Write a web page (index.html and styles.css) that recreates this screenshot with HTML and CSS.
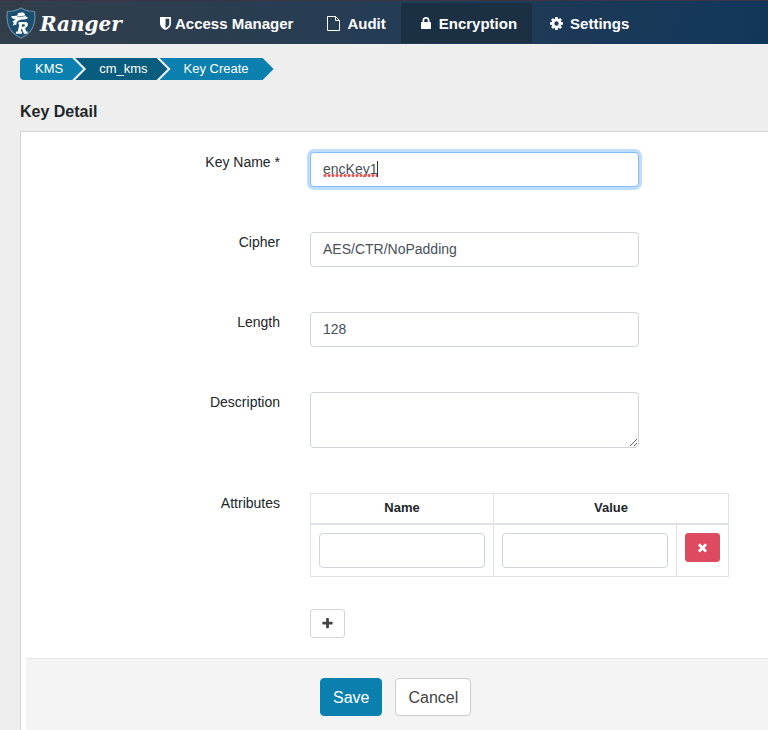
FILE: index.html
```html
<!DOCTYPE html>
<html lang="en">
<head>
<meta charset="utf-8">
<meta name="viewport" content="width=device-width, initial-scale=1">
<title>Ranger - Key Create</title>
<link rel="stylesheet" href="styles.css">
</head>
<body>
<header class="topbar">
  <a class="brand" href="#">
    <svg class="brand-shield" viewBox="0 0 30 32" aria-hidden="true">
      <path d="M15 1C11 3.500 6.500 4.500 1.500 4.500C.7 10 .9 16 3.500 21C6 25.500 10 29 15 31C20 29 24 25.500 26.500 21C29.100 16 29.300 10 28.500 4.500C23.500 4.500 19 3.500 15 1Z" fill="#1b4f70" stroke="#66899f" stroke-width="1.200"/>
      <path d="M5 9.500C7 8.800 9.500 9 11.500 8.500C11.500 6.500 12.500 5 14 6C15.500 4.500 18 5 19 7.500C19.200 8.500 19.500 9.500 20.500 9.800C21.500 10 22 10.500 21.500 11.500C19 12.800 15 12 12.500 13.500L10.500 15.500L10.500 17.500L6.500 18.500L7.800 16L6.500 14.500L9.500 12.500C7.500 12 5.500 11 5 9.500Z" fill="#fff"/>
      <path d="M11.500 9.500C14 10 17 9.500 19.300 8.600" fill="none" stroke="#1b4f70" stroke-width=".7"/>
      <path d="M12.800 15H19Q22.800 15.300 21.700 18.500Q21 20.600 19 21.100L20.300 24.500H21.700L21.200 26.800H17.900L15.900 21.800H15.300L14.800 24.500H16.200L15.700 26.800H9.800L10.300 24.500H11.800L13.300 17.300H12.300ZM16.200 17.300L15.700 19.800H17.300Q18.700 19.600 18.900 18.400Q19 17.300 17.900 17.300Z" fill="#fff" fill-rule="evenodd"/>
    </svg>
    <span class="brand-name">Ranger</span>
  </a>
  <nav class="menu">
    <a class="menu-item" href="#">
      <svg class="icon-shield" viewBox="0 0 11 13" aria-hidden="true"><path d="M0 0H11V6.500C11 9.500 8.500 11.800 5.500 13C2.500 11.800 0 9.500 0 6.500ZM5.500 1.800V11.100C7.700 10 9.300 8.500 9.300 6.500V1.800Z" fill="#fff" fill-rule="evenodd"/></svg>Access Manager</a>
    <a class="menu-item menu-audit" href="#">
      <svg class="icon-file" viewBox="0 0 13 15" aria-hidden="true"><path d="M.5.5H8.500L12.500 4.500V14.500H.5ZM8.500.5V4.500H12.500" fill="none" stroke="#fff"/></svg>Audit</a>
    <a class="menu-item menu-active" href="#" aria-current="page">
      <svg class="icon-lock" viewBox="0 0 10 12" aria-hidden="true"><path d="M1.500 5V3.500A3.500 3.500 0 0 1 8.500 3.500V5H9.200Q10 5 10 5.800V11.200Q10 12 9.200 12H.8Q0 12 0 11.200V5.800Q0 5 .8 5ZM3.200 5H6.800V3.600A1.800 1.800 0 0 0 3.200 3.600Z" fill="#fff" fill-rule="evenodd"/></svg>Encryption</a>
    <a class="menu-item menu-settings" href="#">
      <svg class="icon-cog" viewBox="128 128 1536 1536" aria-hidden="true"><path fill="#fff" d="M1152 896q0-106-75-181t-181-75-181 75-75 181 75 181 181 75 181-75 75-181zm512-109v222q0 12-8 23t-20 13l-185 28q-19 54-39 91 35 50 107 138 10 12 10 25t-9 23q-27 37-99 108t-94 71q-12 0-26-9l-138-108q-44 23-91 38-16 136-29 186-7 28-36 28h-222q-14 0-24.500-8.500t-11.500-21.500l-28-184q-49-16-90-37l-141 107q-10 9-25 9-14 0-25-11-126-114-165-168-7-10-7-23 0-12 8-23 15-21 51-66.500t54-70.500q-27-50-41-99l-183-27q-13-2-21-12.500t-8-23.500v-222q0-12 8-23t19-13l186-28q14-46 39-92-40-57-107-138-10-12-10-24 0-10 9-23 26-36 98.500-107.500t94.500-71.500q13 0 26 10l138 107q44-23 91-38 16-136 29-186 7-28 36-28h222q14 0 24.500 8.500t11.500 21.500l28 184q49 16 90 37l142-107q9-9 24-9 13 0 25 10 129 119 165 170 7 8 7 22 0 12-8 23-15 21-51 66.500t-54 70.500q26 50 41 98l183 28q13 2 21 12.500t8 23.500z"/></svg>Settings</a>
  </nav>
</header>

<main class="page">
  <nav class="crumbs" aria-label="Breadcrumb">
    <a class="crumb crumb-first" href="#">KMS</a>
    <a class="crumb crumb-dark" href="#">cm_kms</a>
    <a class="crumb crumb-last" href="#">Key Create</a>
  </nav>
  <h1 class="title">Key Detail</h1>

  <form class="panel">
    <div class="fields">
      <label class="label" for="key-name">Key Name *</label>
      <div class="control typed">
        <input class="input input-focus" id="key-name" type="text" value="encKey1" spellcheck="false">
        <span class="spelling"></span>
      </div>

      <label class="label" for="cipher">Cipher</label>
      <div class="control"><input class="input" id="cipher" type="text" value="AES/CTR/NoPadding"></div>

      <label class="label" for="length">Length</label>
      <div class="control"><input class="input" id="length" type="text" value="128"></div>

      <label class="label" for="description">Description</label>
      <div class="control"><textarea class="input textarea" id="description"></textarea></div>

      <span class="label" id="attributes">Attributes</span>
      <div class="attributes">
        <table class="table" aria-labelledby="attributes">
          <colgroup><col class="col-text"><col class="col-text"><col></colgroup>
          <thead>
            <tr><th>Name</th><th colspan="2">Value</th></tr>
          </thead>
          <tbody>
            <tr>
              <td><input class="input" type="text" aria-label="Name"></td>
              <td><input class="input" type="text" aria-label="Value"></td>
              <td><button class="small-btn remove" type="button" aria-label="Remove attribute"><svg class="icon-small" viewBox="0 0 1792 1792" aria-hidden="true"><path fill="#fff" d="M1490 1322q0 40-28 68l-136 136q-28 28-68 28t-68-28l-294-294-294 294q-28 28-68 28t-68-28l-136-136q-28-28-28-68t28-68l294-294-294-294q-28-28-28-68t28-68l136-136q28-28 68-28t68 28l294 294 294-294q28-28 68-28t68 28l136 136q28 28 28 68t-28 68l-294 294 294 294q28 28 28 68z"/></svg></button></td>
            </tr>
          </tbody>
        </table>
        <button class="small-btn add" type="button" aria-label="Add attribute"><svg class="icon-small" viewBox="0 0 1792 1792" aria-hidden="true"><path fill="#444" d="M1600 736v192q0 40-28 68t-68 28h-416v416q0 40-28 68t-68 28h-192q-40 0-68-28t-28-68v-416h-416q-40 0-68-28t-28-68v-192q0-40 28-68t68-28h416v-416q0-40 28-68t68-28h192q40 0 68 28t28 68v416h416q40 0 68 28t28 68z"/></svg></button>
      </div>
    </div>
    <div class="actions">
      <button class="btn save" type="button">Save</button>
      <button class="btn cancel" type="button">Cancel</button>
    </div>
  </form>
</main>
</body>
</html>
```
FILE: styles.css
```css
* {
  box-sizing: border-box;
}

body {
  margin: 0;
  min-height: 100vh;
  display: flex;
  flex-direction: column;
  background: #eee;
  color: #212529;
  font-family: "Liberation Sans", Arial, sans-serif;
  font-size: 14px;
  line-height: 21px;
}

/* Header */
.topbar {
  display: flex;
  height: 44px;
  border-top: 1px solid #3a3444;
  background: linear-gradient(100deg, #323e4a 0%, #263d54 45%, #12365a 100%);
}

.brand {
  display: flex;
  align-items: center;
  gap: 4px;
  width: 145px;
  padding-left: 6px;
  color: #fff;
  text-decoration: none;
}

.brand-shield {
  width: 30px;
  height: 32px;
}

.brand-name {
  padding-top: 4px;
  font-family: "DejaVu Serif", serif;
  font-size: 20px;
  font-style: italic;
  font-weight: bold;
}

.menu {
  display: flex;
  padding: 2px 0 1px;
}

.menu-item {
  display: flex;
  align-items: center;
  gap: 4px;
  padding: 0 15px;
  color: #fff;
  font-size: 15px;
  font-weight: bold;
  text-decoration: none;
  white-space: nowrap;
}

.menu-audit {
  gap: 7px;
  padding-left: 19px;
}

.menu-active {
  gap: 8px;
  padding-left: 20px;
  background: #1b3143;
}

.menu-settings {
  gap: 7px;
  padding-left: 18px;
}

.icon-shield {
  width: 11px;
  height: 13px;
}

.icon-file {
  width: 13px;
  height: 15px;
}

.icon-lock {
  width: 10px;
  height: 12px;
}

.icon-cog {
  width: 13px;
  height: 13px;
}

/* Page */
.page {
  flex: 1;
  display: flex;
  flex-direction: column;
  padding: 14px 0 0 20px;
}

.crumbs {
  display: flex;
}

.crumb {
  height: 22px;
  margin-right: -8px;
  padding: 0 20px 0 24px;
  background: #0b7fad;
  clip-path: polygon(0 0, calc(100% - 11px) 0, 100% 50%, calc(100% - 11px) 100%, 0 100%, 11px 50%);
  color: #fff;
  font-size: 13px;
  line-height: 22px;
  text-decoration: none;
}

.crumb-first {
  padding-left: 15px;
  border-radius: 4px 0 0 4px;
  clip-path: polygon(0 0, calc(100% - 11px) 0, 100% 50%, calc(100% - 11px) 100%, 0 100%);
}

.crumb-dark {
  background: #085c7d;
}

.crumb-last {
  padding-right: 25px;
}

.title {
  margin: 21px 0 9px;
  font-size: 16px;
  line-height: 21px;
}

.panel {
  flex: 1;
  display: flex;
  flex-direction: column;
  border: solid #d3d3d3;
  border-width: 1px 0 0 1px;
  background: #fff;
}

.fields {
  display: grid;
  grid-template-columns: 259px minmax(0, 1fr);
  gap: 45px 30px;
  padding: 20px 30px 20px 0;
}

.label {
  text-align: right;
}

.control {
  display: flex;
  max-width: 329px;
}

.input {
  display: block;
  width: 100%;
  height: 35px;
  padding: 5px 12px 7px;
  border: 1px solid #ced4da;
  border-radius: 4px;
  background: #fff;
  color: #495057;
  font: inherit;
  outline: none;
}

.input-focus {
  border-color: #80bdff;
  box-shadow: 0 0 0 3px #bfdeff;
}

.textarea {
  height: 56px;
  resize: vertical;
}

/* Spelling underline and text cursor over the typed value */
.typed {
  position: relative;
}

.spelling {
  position: absolute;
  top: 9px;
  left: 13px;
  width: 55px;
  height: 16px;
  border-right: 1px solid #333;
  background: radial-gradient(circle at 50% 50%, #e8534d 1px, transparent 2px) 0 100% / 4px 3px repeat-x;
  pointer-events: none;
}

/* Attributes */
.table {
  width: 419px;
  border-collapse: collapse;
  table-layout: fixed;
}

.col-text {
  width: 183px;
}

.table th,
.table td {
  padding: 8px;
  border: 1px solid #dee2e6;
  vertical-align: top;
}

.table th {
  padding: 3px 8px 5px;
  border-bottom-width: 2px;
  font-size: 13px;
}

.small-btn {
  display: flex;
  align-items: center;
  justify-content: center;
  width: 35px;
  height: 29px;
  padding: 0;
  border: 1px solid #d5d5d5;
  border-radius: 3px;
  background: #fff;
}

.remove {
  border-color: #dd4b60;
  background: #dd4b60;
}

.add {
  margin-top: 32px;
}

.icon-small {
  width: 13px;
  height: 13px;
}

/* Form actions */
.actions {
  flex: 1;
  display: flex;
  align-items: flex-start;
  gap: 13px;
  margin-left: 5px;
  padding: 19px 20px 14px 294px;
  border-top: 1px solid #e3e3e3;
  background: #f4f4f4;
}

.btn {
  height: 38px;
  padding: 2px 12px 0;
  border: 1px solid #ccc;
  border-radius: 4px;
  background: #fff;
  color: #444;
  font-family: inherit;
  font-size: 16px;
}

.save {
  border-color: #0b7fad;
  background: #0b7fad;
  color: #fff;
}
```
